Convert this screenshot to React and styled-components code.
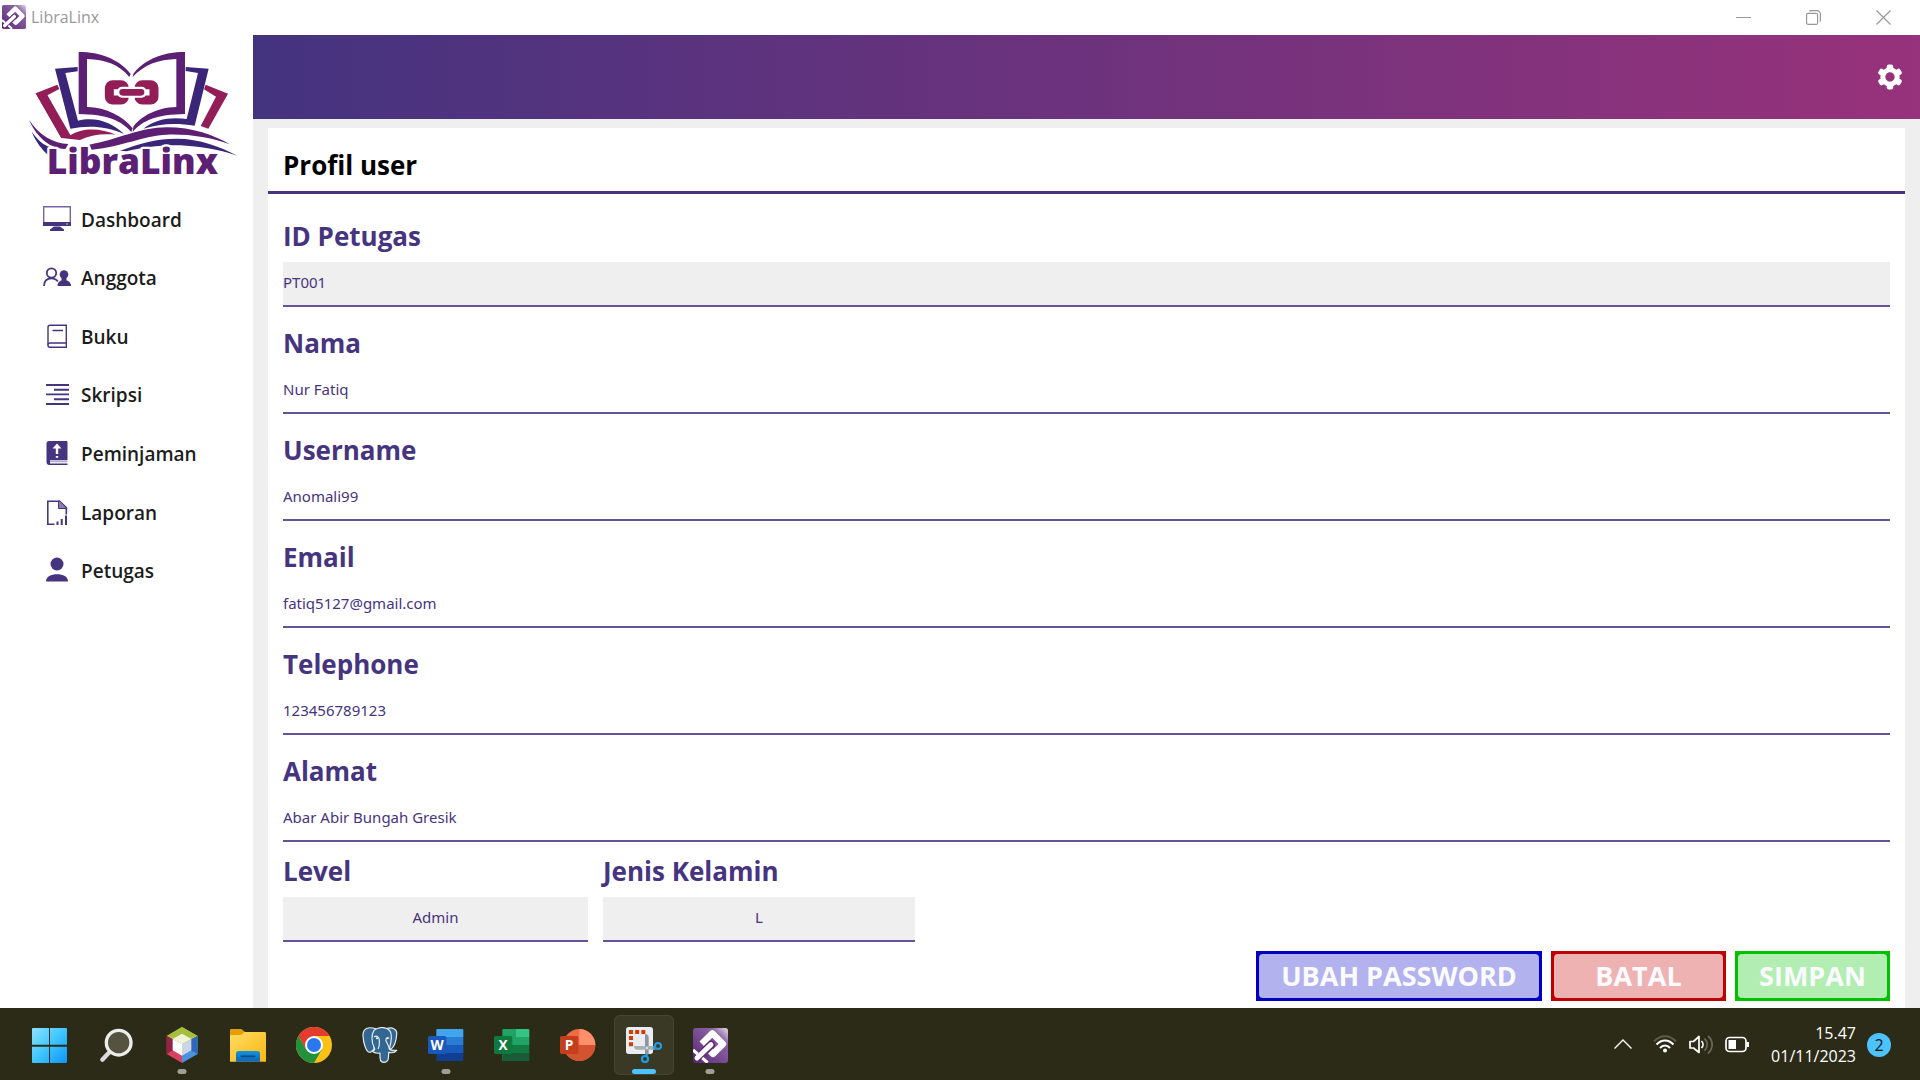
import React from "react";
import styled, { createGlobalStyle, css } from "styled-components";

const violet = "#46347f";
const panelGrey = "#efefef";

const GlobalStyle = createGlobalStyle`
  *, *::before, *::after { box-sizing: border-box; }
  body { margin: 0; font-family: "Open Sans", "Noto Sans", sans-serif; background: #fff; }
  button, input { font: inherit; color: inherit; }
  button { padding: 0; border: 0; background: none; cursor: pointer; }
  svg { display: block; flex: none; }
`;

const Screen = styled.div`
  min-height: 100vh;
  display: flex;
  flex-direction: column;
`;

/* ---------- window title bar ---------- */

const TitleBar = styled.div`
  height: 35px;
  display: flex;
  align-items: center;
  padding: 0 2px 1px;
  background: #fff;
`;

const WindowTitle = styled.span`
  flex: 1;
  margin-left: 5px;
  font-size: 16px;
  line-height: 24px;
  color: #999;
`;

const WindowButton = styled.button`
  width: 70px;
  height: 33px;
  display: grid;
  place-items: center;
`;

/* ---------- application frame ---------- */

const Body = styled.div`
  flex: 1;
  display: flex;
`;

const Sidebar = styled.aside`
  width: 253px;
  flex: none;
  padding: 12px 0 0;
  background: #fff;
`;

const LogoBox = styled.div`
  padding-left: 25px;
`;

const Nav = styled.nav`
  height: 410px;
  display: grid;
  grid-auto-rows: 1fr;
`;

const NavLink = styled.a`
  display: flex;
  align-items: center;
  gap: 10px;
  padding: 0 0 1px 43px;
  font-size: 19px;
  line-height: 28px;
  font-weight: 600;
  color: #1c1c1c;
  text-decoration: none;
`;

const Main = styled.main`
  flex: 1;
  min-width: 0;
  display: flex;
  flex-direction: column;
  background: ${panelGrey};
`;

const Header = styled.header`
  height: 84px;
  display: flex;
  align-items: center;
  justify-content: flex-end;
  padding: 0 18px;
  background: linear-gradient(90deg, #44337f, #97327b);
`;

const IconButton = styled.button`
  display: grid;
  place-items: center;
`;

const Card = styled.form`
  flex: 1;
  margin: 9px 15px 0;
  background: #fff;
  color: ${violet};
`;

const CardTitle = styled.h1`
  margin: 0;
  padding: 21px 15px 10px;
  border-bottom: 3px solid ${violet};
  font-size: 26px;
  line-height: 32px;
  font-weight: 700;
  color: #000;
`;

const Fields = styled.div`
  display: flex;
  flex-direction: column;
  gap: 16px;
  padding: 22px 15px 0;
`;

const Field = styled.div`
  width: ${(p) => (p.$width ? p.$width + "px" : "auto")};
  display: flex;
  flex-direction: column;
  gap: 6px;
`;

const Label = styled.label`
  font-size: 26px;
  line-height: 40px;
  font-weight: 700;
`;

const TextInput = styled.input`
  width: 100%;
  height: 45px;
  padding: 0 0 3px;
  border: 0;
  border-bottom: 2px solid #63549a;
  border-radius: 0;
  outline: none;
  background: #fff;
  font-family: "Noto Sans", "Open Sans", sans-serif;
  font-size: 15px;
  ${(p) => p.$centered && css`text-align: center;`}
  &:read-only { background: ${panelGrey}; }
`;

const PairRow = styled.div`
  display: flex;
  gap: 15px;
  padding: 9px 15px 0;
`;

const Actions = styled.div`
  display: flex;
  justify-content: flex-end;
  gap: 9px;
  padding: 9px 15px 7px;
`;

const ActionButton = styled.button`
  width: ${(p) => p.$width}px;
  height: 50px;
  padding: 3px;
  display: flex;
  background: ${(p) => p.$edge};
  span {
    flex: 1;
    border-radius: 4px;
    background: ${(p) => p.$fill};
    font-size: 27px;
    line-height: 44px;
    font-weight: 700;
    color: #fbfbff;
  }
`;

/* ---------- taskbar ---------- */

const Taskbar = styled.footer`
  height: 72px;
  display: flex;
  align-items: center;
  justify-content: space-between;
  padding: 2px 29px 0 20px;
  background: #2c2b17;
  color: #fff;
`;

const Apps = styled.div`
  display: flex;
  gap: 6px;
`;

const AppButton = styled.button`
  position: relative;
  width: 60px;
  height: 60px;
  display: grid;
  place-items: center;
  border-radius: 6px;
  ${(p) => p.$state === "active" && css`
    background: #3a3926;
    box-shadow: inset 0 0 0 1px #454432;
  `}
  ${(p) => p.$state && css`
    &::after {
      content: "";
      position: absolute;
      bottom: 1px;
      left: 50%;
      width: ${p.$state === "active" ? 24 : 9}px;
      height: 5px;
      border-radius: 3px;
      transform: translateX(-50%);
      background: ${p.$state === "active" ? "#4cc2ff" : "#a09f96"};
    }
  `}
`;

const Tray = styled.div`
  display: flex;
  align-items: center;
`;

const TrayIcons = styled.div`
  display: flex;
  align-items: center;
  gap: 12px;
  margin: 0 22px 0 21px;
`;

const Clock = styled.time`
  font-size: 16px;
  line-height: 23px;
  text-align: right;
  span { display: block; }
`;

const Badge = styled.span`
  width: 24px;
  height: 24px;
  margin-left: 11px;
  border-radius: 50%;
  background: #4cc2ff;
  color: #111;
  font-size: 16px;
  line-height: 24px;
  text-align: center;
`;

/* ---------- drawings ---------- */

const Logo = () => (
  <svg width="215" height="144" viewBox="75 141 645 432" role="img" aria-label="LibraLinx">
    <g fill="#921d57">
      <path d="M107 280 172 254 178 267 142 286 207 408C250 380 305 385 347 404 305 400 270 405 240 420L184 414Z" />
      <path d="M107 280 142 286 215 412 184 414Z" />
      <path d="M617 254 684 281 625 386 602 378 648 290 612 268Z" />
    </g>
    <g fill="#3b2578">
      <path d="M165 206 233 201V214L196 219 234 362C290 348 340 370 372 402 320 378 265 375 211 386Z" />
      <path d="M557 201 626 206 584 377C530 368 480 370 430 386 465 357 515 350 560 357L594 219 557 213Z" />
      <path d="M360 452C420 430 470 416 530 416 600 416 660 440 712 467 650 445 600 440 560 437 500 432 430 440 380 454Z" />
      <path d="M95 395C115 422 130 434 150 442V470C125 450 105 420 95 395Z" />
    </g>
    <g fill="#5c1f74">
      <path d="M236 156H250C310 158 365 185 392 222L388 231C360 195 315 178 261 177V321C320 322 370 350 398 385L394 396C365 362 320 343 236 342Z" />
      <path d="M555 156H541C481 158 426 185 400 222L398 231C431 195 476 178 529 177V321C471 322 421 350 400 380L398 396C426 362 471 343 555 342Z" />
      <path d="M268 434C350 420 420 382 500 382 580 382 640 405 690 433 630 412 570 402 500 404 430 406 370 440 275 449Z" />
      <path d="M87 360C120 408 160 430 205 432L196 447C140 445 105 400 87 360Z" />
    </g>
    <g fill="none" stroke="#921d57" strokeWidth="27">
      <rect x="328" y="254" width="45" height="46" rx="10" />
      <rect x="417" y="254" width="45" height="46" rx="10" />
    </g>
    <rect x="352" y="260" width="87" height="33" rx="14" fill="#fff" />
    <rect x="358" y="267" width="75" height="20" rx="10" fill="#921d57" />
    <text
      x="140" y="523" fontFamily="Open Sans, sans-serif" fontWeight="800" fontSize="106"
      fill="#5c1f74" stroke="#fff" strokeWidth="14" strokeLinejoin="round" paintOrder="stroke"
    >LibraLinx</text>
  </svg>
);

const AppMark = ({ size }) => (
  <svg width={size} height={size} viewBox="0 0 105 105">
    <defs>
      <linearGradient id={"mark" + size} x1="0" y1="1" x2="1" y2="0">
        <stop offset="0" stopColor="#5c2677" />
        <stop offset=".75" stopColor="#8a62a3" />
        <stop offset="1" stopColor="#e4dbea" />
      </linearGradient>
    </defs>
    <rect width="105" height="105" rx="8" fill={`url(#mark${size})`} />
    <path d="M26 47 58 16 90 48 60 78 52 70" fill="none" stroke="#fff" strokeWidth="19" strokeLinejoin="round" />
    <path d="M12 90 54 50" stroke="#5c2677" strokeWidth="23" strokeLinecap="round" />
    <path d="M12 90 54 50" stroke="#fff" strokeWidth="15" strokeLinecap="round" />
    <path d="M0 66 14 78M28 90 44 104" stroke="#fff" strokeWidth="9" />
  </svg>
);

const MinimizeIcon = () => (
  <svg width="15" height="15" fill="none" stroke="#999"><path d="M0 7.500H15" /></svg>
);
const RestoreIcon = () => (
  <svg width="15" height="15" fill="none" stroke="#999" strokeWidth="1.2">
    <rect x=".6" y="3.4" width="11" height="11" rx="1.5" />
    <path d="M3.4 1.4C3.8.8 4.300.6 5 .6H11A3.400 3.400 0 0 1 14.400 4V10C14.400 10.800 14.200 11.200 13.600 11.600" />
  </svg>
);
const CloseIcon = () => (
  <svg width="15" height="15" stroke="#999" strokeWidth="1.2"><path d="M.5.5 14.500 14.500M14.500.5.5 14.500" /></svg>
);

const GearIcon = () => (
  <svg width="24" height="26" viewBox="-12 -13 24 26">
    <circle r="7.200" fill="none" stroke="#fff" strokeWidth="5" />
    <g fill="#fff">
      {[0, 60, 120, 180, 240, 300].map((a) => (
        <rect key={a} x="-3.200" y="-12.600" width="6.400" height="6" rx="2" transform={`rotate(${a})`} />
      ))}
    </g>
  </svg>
);

const NavIcon = ({ children }) => (
  <svg width="28" height="28" viewBox="0 0 28 28" fill="none" stroke={violet} strokeWidth="1.4">{children}</svg>
);

const navItems = [
  ["Dashboard", <>
    <path d="M.7 .7H27.300V19.300H.7Z" stroke="#7566a3" />
    <path d="M0 16H28V20H0ZM11 20.500H17L21 23.500V25H7V23.500Z" fill={violet} stroke="none" />
    <path d="M23 18h2" stroke="#cfc8e0" strokeWidth="1" />
  </>],
  ["Anggota", <>
    <circle cx="8.500" cy="9" r="4.700" strokeWidth="1.800" />
    <path d="M1 22C1 17 4 14.300 8.500 14.300 11.500 14.300 13.500 15.500 14.800 17.500" strokeWidth="1.800" />
    <circle cx="21" cy="10.500" r="4.300" fill={violet} stroke="none" />
    <path d="M14.500 22C14.500 18 17.500 16 21 16S28 18 28 22Z" fill={violet} stroke="none" />
    <path d="M18.500 13.500H23.500V17.500H18.500Z" fill={violet} stroke="none" />
  </>],
  ["Buku", <>
    <path d="M7 2.200H23.300V24.300H7C5.600 24.300 5 23.400 5 22.300V4.200C5 3 5.800 2.200 7 2.200Z" />
    <path d="M5 21.800C5 20.500 5.800 20 7 20H23.300M9.500 7.500H20" />
  </>],
  ["Skripsi", <path d="M3 4H26M11 8.700H26M3 13.400H26M11 18.200H26M3 23H26" strokeWidth="1.900" />],
  ["Peminjaman", <>
    <path d="M6 1H23C24 1 24.500 1.500 24.500 2.500V20H7V23.500H24.500V25H6.500C4.500 25 3.500 24 3.500 22V3.500C3.500 2 4.500 1 6 1Z" fill={violet} stroke="none" />
    <path d="M7 21.300H24.500" stroke="#b5abd0" strokeWidth="2" />
    <path d="M14 3.500 18.500 8.500H15.200V14H12.800V8.500H9.500ZM12.800 16H15.200V17.800H12.800Z" fill="#fff" stroke="none" />
  </>],
  ["Laporan", <>
    <path d="M11.500 25.200H4.800V2.200H16.500L23.300 8.500V15.500" strokeWidth="1.600" />
    <path d="M15.500 2V9.500H24L17 2Z" fill="#8a7db3" stroke={violet} strokeWidth="1" />
    <path d="M14.500 26V22.500M18.700 26V20M23 26V16.500" strokeWidth="2" />
  </>],
  ["Petugas", <>
    <circle cx="14" cy="7" r="6.500" fill={violet} stroke="none" />
    <path d="M3 24.500C3 19.500 8 17.200 14 17.200S25 19.500 25 24.500Z" fill={violet} stroke="none" />
  </>],
];

const TaskIcon = ({ children }) => (
  <svg width="36" height="36" viewBox="0 0 108 108">{children}</svg>
);

const StartIcon = () => (
  <TaskIcon>
    <defs>
      <linearGradient id="win" x1="0" y1="0" x2="108" y2="108" gradientUnits="userSpaceOnUse">
        <stop stopColor="#8fe3ff" /><stop offset=".5" stopColor="#3fc6ff" /><stop offset="1" stopColor="#0a93f8" />
      </linearGradient>
    </defs>
    <g fill="url(#win)">
      <path d="M3 3H51V53H0V6Q0 3 3 3ZM54 3H102Q105 3 105 6V53H54ZM0 59H51V108H3Q0 108 0 105ZM54 59H105V105Q105 108 102 108H54Z" />
    </g>
  </TaskIcon>
);

const SearchIcon = () => (
  <TaskIcon>
    <path d="M32 78 13 98" stroke="#d9dadd" strokeWidth="13" strokeLinecap="round" />
    <circle cx="62" cy="47" r="37" fill="#55533f" stroke="#eceded" strokeWidth="10" />
  </TaskIcon>
);

const NetBeansIcon = () => (
  <TaskIcon>
    <path d="M54 0 101 27 54 52 8 27Z" fill="#b5cc4b" />
    <path d="M54 0 101 27 78 32 54 20 30 32 8 27Z" fill="#a6be3e" />
    <path d="M8 27 54 52V108L8 81Z" fill="#d9415f" />
    <path d="M8 27 28 38V70L8 81Z" fill="#8f2443" />
    <path d="M101 27 54 52V108L101 81Z" fill="#4a92e0" />
    <path d="M101 27 81 38V70L101 81Z" fill="#2f68b8" />
    <path d="M54 20 82 36 54 52 26 36Z" fill="#eff3d8" />
    <path d="M26 36 54 52V86L26 70Z" fill="#fff" />
    <path d="M82 36 54 52V86L82 70Z" fill="#ccd6e0" />
  </TaskIcon>
);

const FolderIcon = () => (
  <TaskIcon>
    <defs>
      <linearGradient id="fold" x1="0" y1="0" x2="1" y2="1"><stop stopColor="#ffdc63" /><stop offset="1" stopColor="#f9b713" /></linearGradient>
      <linearGradient id="foldBlue" x1="0" y1="0" x2="0" y2="1"><stop stopColor="#1793dc" /><stop offset="1" stopColor="#0d64b4" /></linearGradient>
    </defs>
    <path d="M0 10Q0 6 4 6H32Q35 6 38 9L46 16V30H0Z" fill="#e69e05" />
    <path d="M0 24H30Q34 24 38 20L43 15H104Q108 15 108 19V104H0Z" fill="url(#fold)" />
    <path d="M18 104V80Q18 72 26 72H82Q90 72 90 80V104Z" fill="url(#foldBlue)" />
    <path d="M34 88H74" stroke="#084a91" strokeWidth="5" strokeLinecap="round" />
  </TaskIcon>
);

const ChromeIcon = () => (
  <TaskIcon>
    <circle cx="54" cy="54" r="54" fill="#fbc116" />
    <path d="M7.200 27A54 54 0 0 1 100.800 27H54L30.600 67.500Z" fill="#e33b2e" />
    <path d="M7.200 27A54 54 0 0 0 54 108L77.400 67.500H30.600Z" fill="#23903c" />
    <circle cx="54" cy="54" r="27" fill="#fff" />
    <circle cx="54" cy="54" r="21" fill="#2b78ee" />
  </TaskIcon>
);

const ElephantIcon = () => (
  <TaskIcon>
    <g fill="#336791" stroke="#e9eef2" strokeWidth="3.500" strokeLinejoin="round">
      <path d="M72 6C90-2 106 6 104 22 103 42 96 60 86 68L76 50Z" />
      <path d="M40 5C20-2 2 4 3 26 4 48 12 76 24 76 30 76 32 70 36 66Z" />
      <path d="M36 10C50-2 78-2 86 16 92 34 84 56 82 66 90 74 100 68 104 70 98 78 88 78 80 76 80 92 80 106 66 106 52 106 54 92 54 78 44 80 36 78 30 72 38 72 40 66 36 60 28 44 28 22 36 10Z" />
      <path d="M36 30C44 24 52 30 52 40 52 50 54 56 48 66M82 34C74 30 68 36 74 46 78 54 82 60 82 66" fill="none" />
    </g>
    <circle cx="45" cy="34" r="3" fill="#fff" /><circle cx="76" cy="34" r="3" fill="#fff" />
  </TaskIcon>
);

const OfficeLetter = ({ fill, children }) => (
  <>
    <rect x="0" y="27" width="55" height="54" rx="5" fill={fill} />
    <text x="27" y="68" textAnchor="middle" fontFamily="Open Sans, sans-serif" fontWeight="700" fontSize="41" fill="#fff">{children}</text>
  </>
);

const WordIcon = () => (
  <TaskIcon>
    <path d="M28 6H103Q106 6 106 9V30H25V9Q25 6 28 6Z" fill="#41a5ee" />
    <path d="M25 30H106V54H25Z" fill="#2b7cd3" />
    <path d="M25 54H106V78H25Z" fill="#185abd" />
    <path d="M25 78H106V99Q106 102 103 102H28Q25 102 25 99Z" fill="#103f91" />
    <OfficeLetter fill="#1b58bd">W</OfficeLetter>
  </TaskIcon>
);

const ExcelIcon = () => (
  <TaskIcon>
    <path d="M28 6H66V102H28Q25 102 25 99V9Q25 6 28 6Z" fill="#21a366" />
    <path d="M66 6H103Q106 6 106 9V30H66Z" fill="#33c481" />
    <path d="M66 30H106V54H66Z" fill="#21a366" />
    <path d="M25 54H106V78H25Z" fill="#107c41" />
    <path d="M25 78H106V99Q106 102 103 102H28Q25 102 25 99Z" fill="#185c37" />
    <OfficeLetter fill="#10793f">X</OfficeLetter>
  </TaskIcon>
);

const PowerPointIcon = () => (
  <TaskIcon>
    <circle cx="58" cy="54" r="48" fill="#ed6c47" />
    <path d="M58 6A48 48 0 0 1 106 54H58Z" fill="#ff8f6b" />
    <path d="M106 54A48 48 0 0 1 10 54Z" fill="#d35230" />
    <OfficeLetter fill="#c43e1c">P</OfficeLetter>
  </TaskIcon>
);

const SnipIcon = () => (
  <TaskIcon>
    <rect x="0" y="0" width="81" height="81" rx="8" fill="#e9edf1" />
    <path d="M9 15H58" stroke="#d83b01" strokeWidth="12" strokeDasharray="12 6.500" />
    <path d="M15 27V58" stroke="#d83b01" strokeWidth="12" strokeDasharray="12 6.500" />
    <path d="M57 21Q68 21 68 32V82H57Z" fill="#8d949b" />
    <path d="M24 57H88V68H34Q24 68 24 57Z" fill="#a9afb5" />
    <circle cx="63" cy="63" r="3" fill="#e9edf1" />
    <g fill="none" stroke="#1f9de4" strokeWidth="6.500">
      <circle cx="57" cy="96" r="9" /><circle cx="96" cy="57" r="9" />
      <path d="M62 89V81M88 62H81" />
    </g>
  </TaskIcon>
);

const ChevronIcon = () => (
  <svg width="18" height="18" fill="none" stroke="#fff" strokeWidth="1.400"><path d="M.5 12.500 9 4 17.500 12.500" /></svg>
);

const WifiIcon = () => (
  <svg width="24" height="24" viewBox="0 0 24 24" fill="none" stroke="#fff" strokeWidth="2">
    <path d="M1 8.500C7 1.500 17 1.500 23 8.500" stroke="#5d5c4b" />
    <path d="M3.500 11.500C8.500 6 15.500 6 20.500 11.500M7 15C10 11.500 14 11.500 17 15" />
    <circle cx="12" cy="17.500" r="2" fill="#fff" stroke="none" />
  </svg>
);

const SpeakerIcon = () => (
  <svg width="24" height="24" viewBox="0 0 24 24" fill="none" stroke="#fff" strokeWidth="1.700" strokeLinejoin="round">
    <path d="M1 8.500H4.500L10 3.500V19.500L4.500 15H1Z" />
    <path d="M12.500 8C14.500 10 14.500 13 12.500 15" />
    <path d="M15.500 5.500C19 8.500 19 14.500 15.500 17.500M19 3C24.500 7.500 24.500 15.500 19 20.500" stroke="#6b6a5a" />
  </svg>
);

const BatteryIcon = () => (
  <svg width="24" height="24" viewBox="0 0 24 24" fill="none" stroke="#fff" strokeWidth="1.700">
    <rect x="1" y="4.500" width="20" height="14" rx="3.500" />
    <path d="M3.500 7H11V16H3.500ZM21.500 9H24V14H21.500Z" fill="#fff" stroke="none" />
  </svg>
);

/* ---------- data ---------- */

const profile = [
  ["id", "ID Petugas", "PT001", true],
  ["nama", "Nama", "Nur Fatiq"],
  ["username", "Username", "Anomali99"],
  ["email", "Email", "fatiq5127@gmail.com"],
  ["telephone", "Telephone", "123456789123"],
  ["alamat", "Alamat", "Abar Abir Bungah Gresik"],
];

const apps = [
  ["Start", <StartIcon />],
  ["Search", <SearchIcon />],
  ["NetBeans", <NetBeansIcon />, "open"],
  ["File Explorer", <FolderIcon />],
  ["Chrome", <ChromeIcon />],
  ["PostgreSQL", <ElephantIcon />],
  ["Word", <WordIcon />, "open"],
  ["Excel", <ExcelIcon />],
  ["PowerPoint", <PowerPointIcon />],
  ["Snipping Tool", <SnipIcon />, "active"],
  ["LibraLinx", <AppMark size={35} />, "open"],
];

export default function App() {
  return (
    <Screen>
      <GlobalStyle />
      <TitleBar>
        <AppMark size={24} />
        <WindowTitle>LibraLinx</WindowTitle>
        <WindowButton aria-label="Minimize"><MinimizeIcon /></WindowButton>
        <WindowButton aria-label="Restore"><RestoreIcon /></WindowButton>
        <WindowButton aria-label="Close"><CloseIcon /></WindowButton>
      </TitleBar>

      <Body>
        <Sidebar>
          <LogoBox><Logo /></LogoBox>
          <Nav>
            {navItems.map(([name, icon]) => (
              <NavLink key={name} href="#">
                <NavIcon>{icon}</NavIcon>
                {name}
              </NavLink>
            ))}
          </Nav>
        </Sidebar>

        <Main>
          <Header>
            <IconButton aria-label="Settings"><GearIcon /></IconButton>
          </Header>
          <Card onSubmit={(e) => e.preventDefault()}>
            <CardTitle>Profil user</CardTitle>
            <Fields>
              {profile.map(([id, label, value, locked]) => (
                <Field key={id}>
                  <Label htmlFor={id}>{label}</Label>
                  <TextInput id={id} defaultValue={value} readOnly={locked} />
                </Field>
              ))}
            </Fields>
            <PairRow>
              <Field $width={305}>
                <Label htmlFor="level">Level</Label>
                <TextInput id="level" defaultValue="Admin" readOnly $centered />
              </Field>
              <Field $width={312}>
                <Label htmlFor="kelamin">Jenis Kelamin</Label>
                <TextInput id="kelamin" defaultValue="L" readOnly $centered />
              </Field>
            </PairRow>
            <Actions>
              <ActionButton type="button" $width={286} $edge="#0000c0" $fill="#b2b2ee"><span>UBAH PASSWORD</span></ActionButton>
              <ActionButton type="reset" $width={175} $edge="#c00000" $fill="#eeb2b2"><span>BATAL</span></ActionButton>
              <ActionButton type="submit" $width={155} $edge="#00c000" $fill="#b2eeb2"><span>SIMPAN</span></ActionButton>
            </Actions>
          </Card>
        </Main>
      </Body>

      <Taskbar>
        <Apps>
          {apps.map(([name, icon, state]) => (
            <AppButton key={name} aria-label={name} $state={state}>{icon}</AppButton>
          ))}
        </Apps>
        <Tray>
          <ChevronIcon />
          <TrayIcons>
            <WifiIcon />
            <SpeakerIcon />
            <BatteryIcon />
          </TrayIcons>
          <Clock dateTime="2023-11-01T15:47">
            <span>15.47</span>
            <span>01/11/2023</span>
          </Clock>
          <Badge>2</Badge>
        </Tray>
      </Taskbar>
    </Screen>
  );
}
